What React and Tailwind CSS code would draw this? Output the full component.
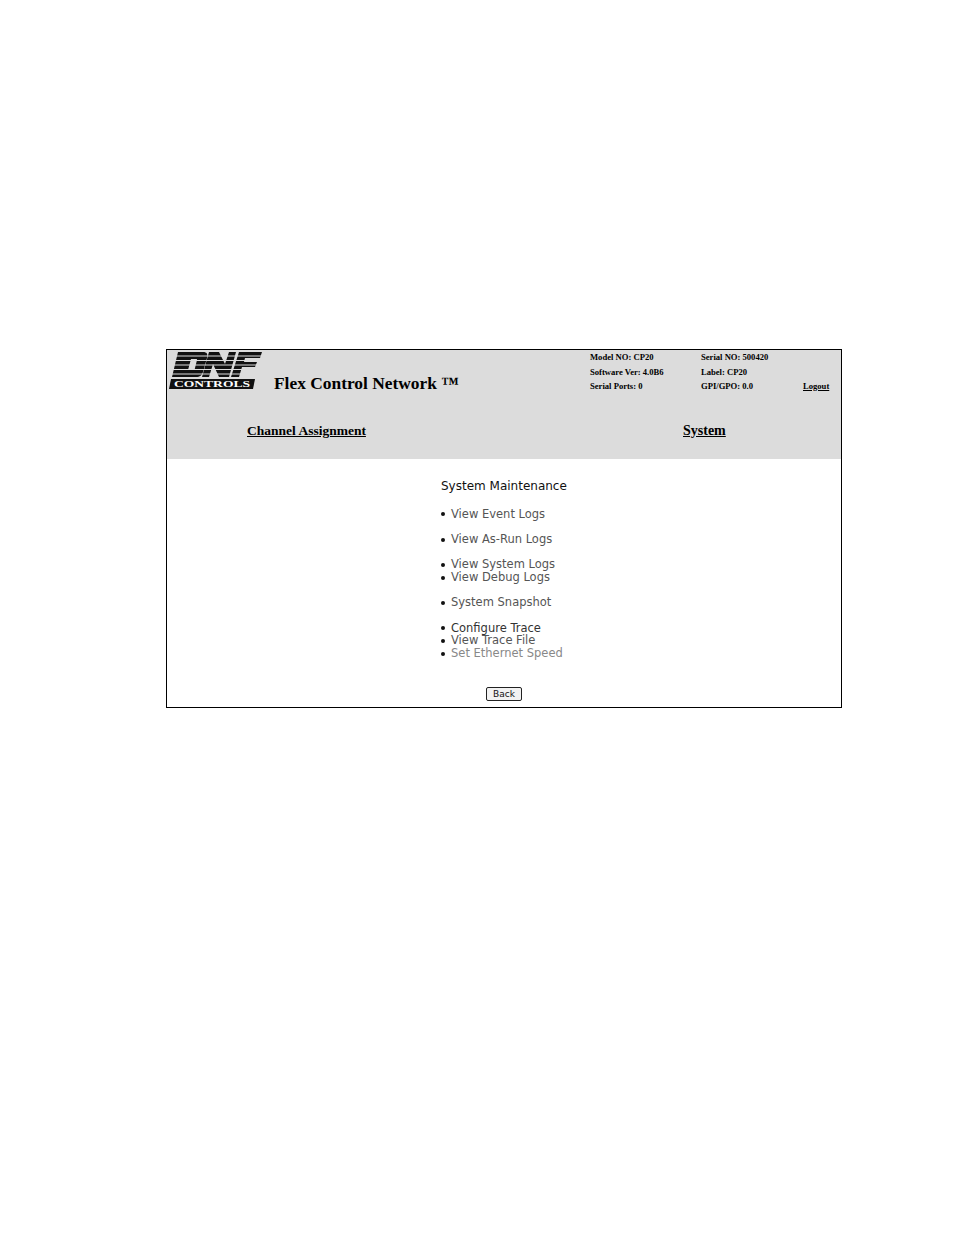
import React from 'react';

const serif = "font-['Liberation_Serif',serif]";

const DnfLogo = () => (
  <svg width="94" height="40" viewBox="0 0 94 40" className="block">
    <path fillRule="evenodd" d="M9 1H34C38 1 39 3 38 7L34 21C33 24 31 26 27 26H3ZM22 8L19 19H24C25 19 26 18 26 17L28 9C28 8 28 8 27 8Z" fill="#111" />
    <path d="M40 1H50L56 13L60 1H67L60 26H50L44 13L40 26H33Z" fill="#111" />
    <path d="M70 1H93L91 7H76L75 11H88L86 16H73L70 26H62Z" fill="#111" />
    <g fill="#dcdcdc">
      <rect x="0" y="4.5" width="94" height="1" />
      <rect x="0" y="9" width="94" height="1" />
      <rect x="0" y="13.5" width="94" height="1" />
      <rect x="0" y="18" width="94" height="1" />
      <rect x="0" y="22.5" width="94" height="1" />
    </g>
    <path d="M2 28H86L84 38H0Z" fill="#111" />
    <text x="5" y="36" textLength="76" lengthAdjust="spacingAndGlyphs" fill="#fff" fontSize="8.5" fontWeight="700" fontFamily="Liberation Serif, serif">
      CONTROLS
    </text>
  </svg>
);

const Info = ({ children, className = '' }) => (
  <div className={`h-[14.5px] text-[8.6px] leading-[14.5px] font-bold text-black whitespace-nowrap ${className}`}>{children}</div>
);

const groups = [
  [['View Event Logs', 'text-[#555]']],
  [['View As-Run Logs', 'text-[#555]']],
  [['View System Logs', 'text-[#555]'], ['View Debug Logs', 'text-[#555]']],
  [['System Snapshot', 'text-[#555]']],
  [['Configure Trace', 'text-[#333]'], ['View Trace File', 'text-[#555]'], ['Set Ethernet Speed', 'text-[#888]']],
];

export default function App() {
  return (
    <div className="min-h-[1235px] bg-white pt-[349px] pl-[166px]">
      <div className="w-[676px] h-[359px] border border-black flex flex-col">
        <div className={`h-[109px] bg-[#dcdcdc] ${serif}`}>
          <div className="flex h-[46px]">
            <div className="w-[107px] pl-[2px] pt-[1px]">
              <DnfLogo />
            </div>
            <div className="w-[316px] pt-[22px] text-[17.4px] leading-[22px] font-bold text-black whitespace-nowrap">
              Flex Control Network ™
            </div>
            <div className="w-[111px]">
              <Info>Model NO: CP20</Info>
              <Info>Software Ver: 4.0B6</Info>
              <Info>Serial Ports: 0</Info>
            </div>
            <div className="w-[102px]">
              <Info>Serial NO: 500420</Info>
              <Info>Label: CP20</Info>
              <Info>GPI/GPO: 0.0</Info>
            </div>
            <div className="pt-[29px]">
              <Info className="underline">Logout</Info>
            </div>
          </div>
          <div className="flex pt-[27px] text-[13.5px] leading-[16px] font-bold text-black underline">
            <div className="w-[516px] pl-[80px]">Channel Assignment</div>
            <div className="text-[14px]">System</div>
          </div>
        </div>
        <div className="flex-1 flex flex-col font-['DejaVu_Sans',sans-serif]">
          <div className="pl-[274px] pt-[20px]">
            <div className="text-[12px] leading-[15px] text-[#111]">System Maintenance</div>
            <div className="mt-[14px] flex flex-col gap-[12.6px]">
              {groups.map((group, i) => (
                <ul key={i}>
                  {group.map(([label, color]) => (
                    <li key={label} className="flex items-center h-[12.7px] text-[11.5px] leading-[13px] whitespace-nowrap">
                      <span className="w-[4px] h-[4px] mr-[6px] rounded-full bg-[#111]" />
                      <span className={color}>{label}</span>
                    </li>
                  ))}
                </ul>
              ))}
            </div>
          </div>
          <div className="mt-[27px] flex justify-center">
            <button className="w-[36px] h-[14px] border border-[#222] rounded-[2px] bg-[#f2f2f2] text-[9px] leading-[12px] text-[#111]">
              Back
            </button>
          </div>
        </div>
      </div>
    </div>
  );
}
